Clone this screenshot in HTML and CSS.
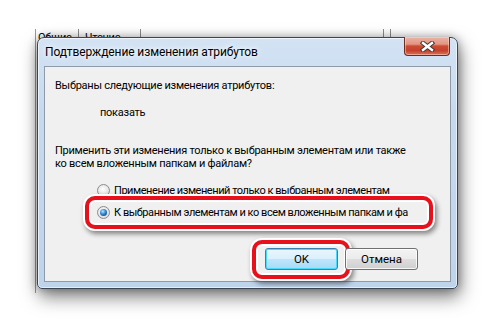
FILE: index.html
```html
<!DOCTYPE html>
<html lang="ru">
<head>
    <meta charset="UTF-8">
    <meta name="viewport" content="width=device-width, initial-scale=1.0">
    <title>Подтверждение изменения атрибутов</title>
    <link rel="stylesheet" href="styles.css">
</head>
<body>

<div class="desktop">
    <!-- window behind the dialog -->
    <div class="bg-window">
        <div class="bg-tabs">
            <span class="bg-tab tab1">Общие</span>
            <span class="bg-tab tab2">Чтение</span>
            <span class="bg-tab tab3"></span>
            <span class="bg-tab tab4"></span>
        </div>
    </div>

    <div class="dialog">
        <div class="titlebar">
            <span class="title">Подтверждение изменения атрибутов</span>
            <button class="close-btn" aria-label="Закрыть">
                <svg width="15" height="11" viewBox="0 0 15 11">
                    <path d="M3 2 L12 9 M12 2 L3 9" stroke="#3b3b3b" stroke-width="4.4" stroke-linecap="square" fill="none"/>
                    <path d="M3 2 L12 9 M12 2 L3 9" stroke="#ffffff" stroke-width="2.4" stroke-linecap="square" fill="none"/>
                </svg>
            </button>
        </div>

        <div class="client">
            <p class="line first">Выбраны следующие изменения атрибутов:</p>
            <p class="line attr">показать</p>
            <p class="question">Применить эти изменения только к выбранным элементам или также<br>ко всем вложенным папкам и файлам?</p>

            <div class="options">
                <label class="option">
                    <span class="radio"></span>
                    <span class="option-text">Применение изменений только к выбранным элементам</span>
                </label>
                <label class="option selected">
                    <span class="radio checked"></span>
                    <span class="option-text">К выбранным элементам и ко всем вложенным папкам и фа</span>
                    <span class="mark mark-option"></span>
                </label>
            </div>

            <div class="buttons">
                <button class="btn btn-default">OK<span class="mark mark-ok"></span></button>
                <button class="btn">Отмена</button>
            </div>
        </div>
    </div>
</div>

</body>
</html>
```

FILE: styles.css
```css
/* General styling */
body {
    margin: 0;
    padding: 0;
    background-color: #ffffff;
    font-family: Roboto, "Liberation Sans", sans-serif;
    font-size: 11px;
    letter-spacing: -0.25px;
    color: #000;
}

.desktop {
    position: relative;
    width: 495px;
    height: 327px;
    padding: 37px 0 0 37px;
    box-sizing: border-box;
    overflow: hidden;
}

/* Window behind the dialog */
.bg-window {
    position: absolute;
    left: 35px;
    top: 29px;
    width: 357px;
    height: 264px;
    background-color: #fff;
    border-left: 1px solid #9a9a9a;
}

.bg-tabs {
    display: flex;
    height: 20px;
}

.bg-tab {
    border-right: 1px solid #8c8c8c;
    font-size: 11px;
    line-height: 18px;
    padding-left: 2px;
    box-sizing: border-box;
    overflow: hidden;
    white-space: nowrap;
}

.tab1 { width: 43px; }
.tab2 { width: 62px; padding-left: 6px; }
.tab3 { width: 243px; }
.tab4 { width: 7px; }

/* Dialog frame */
.dialog {
    position: relative;
    width: 421px;
    height: 252px;
    box-sizing: border-box;
    display: flex;
    flex-direction: column;
    padding: 0 6px 6px 6px;
    border: 1px solid #3a4654;
    border-radius: 7px 7px 5px 5px;
    background: linear-gradient(to bottom, #d3e3f4 0%, #c6daef 30%, #bed4eb 100%);
    box-shadow: inset 0 0 0 1px rgba(255, 255, 255, 0.6),
                2px 8px 18px rgba(0, 0, 0, 0.5),
                0 0 10px rgba(0, 0, 0, 0.3);
}

.titlebar {
    height: 28px;
    display: flex;
    justify-content: space-between;
    align-items: flex-start;
}

.title {
    padding-left: 1px;
    margin-top: 6px;
    font-size: 12px;
    letter-spacing: -0.1px;
    line-height: 16px;
    color: #000;
    text-shadow: 0 0 8px #fff, 0 0 4px #fff;
}

.close-btn {
    width: 46px;
    height: 19px;
    margin-top: -1px;
    margin-right: 1px;
    padding: 0;
    border: 1px solid #6b2c22;
    border-top: none;
    border-radius: 0 0 4px 4px;
    background: linear-gradient(to bottom, #eab4a6 0%, #e39582 40%, #cc4c33 50%, #c5412c 75%, #d9735c 100%);
    box-shadow: inset 0 0 0 1px rgba(255, 220, 210, 0.5);
    display: flex;
    align-items: center;
    justify-content: center;
}

/* Client area */
.client {
    flex: 1;
    background-color: #f0f0f0;
    border: 1px solid #8e9aa8;
    padding: 0;
}

.line {
    margin: 0;
    line-height: 15px;
}

.first {
    margin-top: 11px;
    padding-left: 10px;
}

.attr {
    margin-top: 12px;
    padding-left: 55px;
}

.question {
    margin: 24px 0 0 0;
    padding-left: 10px;
    line-height: 13px;
    white-space: nowrap;
}

/* Radio options */
.options {
    margin-top: 9px;
}

.option {
    position: relative;
    display: flex;
    align-items: center;
    height: 22px;
    padding-left: 52px;
}

.radio {
    position: relative;
    width: 11px;
    height: 11px;
    border-radius: 50%;
    border: 1px solid #8a8c8e;
    background: radial-gradient(circle at 45% 40%, #ffffff 0%, #e9e9e9 50%, #cfcfcf 100%);
    margin-right: 4px;
    flex-shrink: 0;
}

.radio.checked::after {
    content: "";
    position: absolute;
    left: 2px;
    top: 2px;
    width: 7px;
    height: 7px;
    border-radius: 50%;
    background: radial-gradient(circle at 40% 35%, #b8ecff 0%, #3c8fd8 40%, #1a5aa6 70%, #0d3b78 100%);
}

.option-text {
    white-space: nowrap;
    line-height: 15px;
    letter-spacing: -0.45px;
}

/* Red highlight marks */
.mark {
    position: absolute;
    box-sizing: border-box;
    border: 4px solid #e8101a;
    border-radius: 10px;
    box-shadow: inset 0 0 0 2px #ffffff,
                0 0 0 2px #ffffff,
                2px 3px 5px 2px rgba(0, 0, 0, 0.45);
    pointer-events: none;
}

.mark-option {
    left: 40px;
    top: -5px;
    width: 348px;
    height: 33px;
}

.mark-ok {
    left: -14px;
    top: -9px;
    width: 98px;
    height: 39px;
}

/* Buttons */
.buttons {
    display: flex;
    justify-content: flex-end;
    gap: 7px;
    margin-top: 25px;
    padding-right: 32px;
}

.btn {
    position: relative;
    width: 73px;
    height: 22px;
    padding: 0;
    font-family: Roboto, "Liberation Sans", sans-serif;
    font-size: 11.5px;
    color: #000;
    border: 1px solid #707070;
    border-radius: 3px;
    background: linear-gradient(to bottom, #f3f3f3 0%, #ebebeb 50%, #dddddd 51%, #cfcfcf 100%);
    box-shadow: inset 0 0 0 1px rgba(255, 255, 255, 0.8);
}

.btn-default {
    border-color: #3c7fb1;
    background: linear-gradient(to bottom, #eaf6fd 0%, #d9f0fc 50%, #bee6fd 51%, #a7d9f5 100%);
    box-shadow: inset 0 0 0 1px #48d9fb;
}
```
